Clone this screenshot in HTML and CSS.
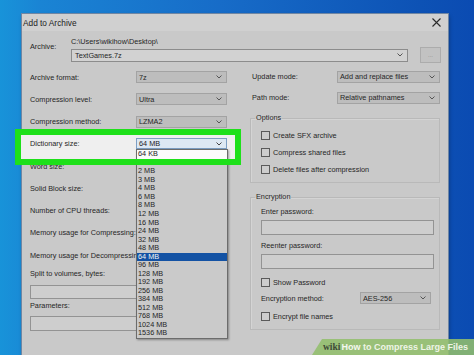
FILE: index.html
```html
<!DOCTYPE html>
<html>
<head>
<meta charset="utf-8">
<title>Add to Archive</title>
<link rel="stylesheet" href="styles.css">
</head>
<body>
<div class="desktop">
  <div class="dialog">
    <div class="titlebar">
      <span class="title">Add to Archive</span>
      <svg class="close" width="9" height="9" viewBox="0 0 9 9"><path d="M0.5 0.5L8.5 8.5M8.5 0.5L0.5 8.5" stroke="#2a2a2a" stroke-width="1.1" fill="none"/></svg>
    </div>

    <div class="archive">
      <span class="archive-lbl">Archive:</span>
      <div class="archive-fields">
        <div class="path">C:\Users\wikihow\Desktop\</div>
        <div class="archive-row">
          <div class="combo"><span>TextGames.7z</span><svg class="chev" width="6" height="4" viewBox="0 0 6 4"><polyline points="0.5,0.5 3,3 5.5,0.5" fill="none" stroke="#555" stroke-width="1"/></svg></div>
          <div class="browse">...</div>
        </div>
      </div>
    </div>

    <div class="columns">
      <div class="left">
        <div class="row"><span class="lbl">Archive format:</span><div class="select"><span>7z</span><svg class="chev" width="6" height="4" viewBox="0 0 6 4"><polyline points="0.5,0.5 3,3 5.5,0.5" fill="none" stroke="#555" stroke-width="1"/></svg></div></div>
        <div class="row"><span class="lbl">Compression level:</span><div class="select"><span>Ultra</span><svg class="chev" width="6" height="4" viewBox="0 0 6 4"><polyline points="0.5,0.5 3,3 5.5,0.5" fill="none" stroke="#555" stroke-width="1"/></svg></div></div>
        <div class="row"><span class="lbl">Compression method:</span><div class="select"><span>LZMA2</span><svg class="chev" width="6" height="4" viewBox="0 0 6 4"><polyline points="0.5,0.5 3,3 5.5,0.5" fill="none" stroke="#555" stroke-width="1"/></svg></div></div>
        <div class="row dict">
          <span class="lbl">Dictionary size:</span>
          <div class="select-wrap">
            <div class="select focus"><span>64 MB</span><svg class="chev" width="6" height="4" viewBox="0 0 6 4"><polyline points="0.5,0.5 3,3 5.5,0.5" fill="none" stroke="#444" stroke-width="1"/></svg></div>
            <ul class="dropdown">
              <li class="lit">64 KB</li>
              <li>1 MB</li>
              <li>2 MB</li>
              <li>3 MB</li>
              <li>4 MB</li>
              <li>6 MB</li>
              <li>8 MB</li>
              <li>12 MB</li>
              <li>16 MB</li>
              <li>24 MB</li>
              <li>32 MB</li>
              <li>48 MB</li>
              <li class="sel">64 MB</li>
              <li>96 MB</li>
              <li>128 MB</li>
              <li>192 MB</li>
              <li>256 MB</li>
              <li>384 MB</li>
              <li>512 MB</li>
              <li>768 MB</li>
              <li>1024 MB</li>
              <li>1536 MB</li>
            </ul>
          </div>
        </div>
        <div class="row"><span class="lbl">Word size:</span></div>
        <div class="row"><span class="lbl">Solid Block size:</span></div>
        <div class="row"><span class="lbl">Number of CPU threads:</span></div>
        <div class="row"><span class="lbl nowrap">Memory usage for Compressing:</span></div>
        <div class="row"><span class="lbl nowrap">Memory usage for Decompressing:</span></div>
        <div class="field-lbl split-lbl">Split to volumes, bytes:</div>
        <div class="input split-in"></div>
        <div class="field-lbl params-lbl">Parameters:</div>
        <div class="input params-in"></div>
      </div>

      <div class="right">
        <div class="rrow"><span class="rlbl">Update mode:</span><div class="select rsel"><span>Add and replace files</span><svg class="chev" width="6" height="4" viewBox="0 0 6 4"><polyline points="0.5,0.5 3,3 5.5,0.5" fill="none" stroke="#555" stroke-width="1"/></svg></div></div>
        <div class="rrow"><span class="rlbl">Path mode:</span><div class="select rsel"><span>Relative pathnames</span><svg class="chev" width="6" height="4" viewBox="0 0 6 4"><polyline points="0.5,0.5 3,3 5.5,0.5" fill="none" stroke="#555" stroke-width="1"/></svg></div></div>

        <fieldset class="group options">
          <legend>Options</legend>
          <div class="check"><span class="box"></span>Create SFX archive</div>
          <div class="check"><span class="box"></span>Compress shared files</div>
          <div class="check"><span class="box"></span>Delete files after compression</div>
        </fieldset>

        <fieldset class="group encryption">
          <legend>Encryption</legend>
          <div class="field-lbl enter-lbl">Enter password:</div>
          <div class="input pw"></div>
          <div class="field-lbl reenter-lbl">Reenter password:</div>
          <div class="input pw"></div>
          <div class="check show-pw"><span class="box"></span>Show Password</div>
          <div class="method-row"><span>Encryption method:</span><div class="select msel"><span>AES-256</span><svg class="chev" width="6" height="4" viewBox="0 0 6 4"><polyline points="0.5,0.5 3,3 5.5,0.5" fill="none" stroke="#555" stroke-width="1"/></svg></div></div>
          <div class="check names"><span class="box"></span>Encrypt file names</div>
        </fieldset>
      </div>
    </div>
  </div>

  <div class="spot"></div>
  <div class="spot-frame"></div>

  <div class="badge"><span class="wiki">wiki</span><span class="how">How</span><span class="rest"> to Compress Large Files</span></div>
</div>
</body>
</html>
```

FILE: styles.css
```css
* { box-sizing: border-box; }

html, body {
  margin: 0;
  padding: 0;
  width: 474px;
  height: 355px;
  overflow: hidden;
}

body {
  font-family: "Liberation Sans", Arial, sans-serif;
  font-size: 7.3px;
  color: #262626;
  background: linear-gradient(to right, #1893d9 0px, #1a84d4 40px, #176cc8 220px, #0d52b5 420px, #0b4bb2 474px);
}

.desktop {
  position: relative;
  width: 474px;
  height: 355px;
  padding: 14px 0 0 22px;
}

.dialog {
  width: 426px;
  height: 345px;
  background: #c9c9c9;
  box-shadow: 0 0 0 1px #6f86a3, 1px 2px 4px rgba(0, 0, 0, 0.35);
}

.titlebar {
  height: 17px;
  display: flex;
  align-items: center;
  justify-content: space-between;
  padding: 0 7px 0 1px;
  background: #d0d0d0;
}

.title {
  font-size: 8.3px;
  color: #222;
}

.close { display: block; }

/* Archive section */
.archive {
  display: flex;
  padding: 6px 0 0 8px;
  height: 32px;
}

.archive-lbl {
  width: 41px;
  padding-top: 5px;
}

.archive-fields {
  display: flex;
  flex-direction: column;
}

.path {
  height: 10px;
  line-height: 10px;
}

.archive-row {
  display: flex;
  align-items: center;
  height: 16px;
}

.combo {
  width: 337px;
  height: 13px;
  border: 1px solid #8c8c8c;
  background: #d2d2d2;
  display: flex;
  align-items: center;
  justify-content: space-between;
  padding: 0 4px 0 3px;
}

.browse {
  margin-left: 12px;
  width: 21px;
  height: 16px;
  border: 1px solid #acacac;
  background: #c2c2c2;
  color: #888;
  font-size: 6px;
  display: flex;
  align-items: center;
  justify-content: center;
}

.chev { display: block; flex: none; }

/* Columns */
.columns {
  display: grid;
  grid-template-columns: 197px 190px;
  column-gap: 23px;
  padding-left: 8px;
  margin-top: 3px;
}

.left {
  display: flex;
  flex-direction: column;
}

.row {
  height: 22.25px;
  display: flex;
  align-items: center;
}

.lbl {
  width: 106px;
  flex: none;
  white-space: nowrap;
}

.select {
  height: 12px;
  border: 1px solid #a3a3a3;
  background: #bdbdbd;
  display: flex;
  align-items: center;
  justify-content: space-between;
  padding: 0 4px 0 2px;
  white-space: nowrap;
}

.left .select { width: 91px; }

.dict {
  position: relative;
  z-index: 2;
}

.select-wrap {
  position: relative;
  width: 91px;
}

.select.focus {
  height: 11px;
  background: #dde8f3;
  border-color: #7d9fc4;
  color: #1e1e1e;
}

.dropdown {
  position: absolute;
  left: 0;
  top: 100%;
  width: 92px;
  margin: 0;
  padding: 0;
  list-style: none;
  background: #cacaca;
  border: 1px solid #6c6c6c;
  box-shadow: 1px 1px 2px rgba(0, 0, 0, 0.35);
}

.dropdown li {
  height: 8.52px;
  line-height: 8.52px;
  padding-left: 1px;
  white-space: nowrap;
}

.dropdown li.lit {
  background: #fbfbfb;
  color: #1e1e1e;
}

.dropdown li.sel {
  background: #1352a4;
  color: #f2f2f2;
}

.field-lbl {
  height: 10px;
  line-height: 10px;
  white-space: nowrap;
}

.input {
  border: 1px solid #939393;
  background: #cecece;
}

.split-lbl { margin-top: 3px; }
.split-in { margin-top: 6px; height: 14px; width: 197px; }
.params-lbl { margin-top: 2px; }
.params-in { margin-top: 5px; height: 15px; width: 197px; }

/* Right column */
.right {
  display: flex;
  flex-direction: column;
}

.rrow {
  height: 21px;
  display: flex;
  align-items: center;
  padding-left: 2px;
}

.rlbl {
  width: 85px;
  flex: none;
}

.rsel { width: 103px; }

.group {
  margin: 0;
  border: 1px solid #b9b9b9;
  box-shadow: inset 1px 1px 0 #d4d4d4;
  padding: 0 8px 0 10px;
  min-width: 0;
}

.group legend {
  padding: 0 1px;
  margin-left: -6px;
  height: 10px;
  line-height: 10px;
}

.options {
  margin-top: 5px;
  padding-top: 3.5px;
  padding-bottom: 4.5px;
}

.check {
  height: 17px;
  display: flex;
  align-items: center;
  white-space: nowrap;
}

.box {
  width: 9px;
  height: 9px;
  border: 1px solid #5a5a5a;
  background: #cdcdcd;
  margin-right: 3px;
  flex: none;
}

.encryption {
  margin-top: 9px;
  padding-bottom: 7px;
}

.enter-lbl { margin-top: 5px; }
.reenter-lbl { margin-top: 6px; }
.pw { margin-top: 3px; height: 15px; width: 173px; }

.show-pw { height: 12px; margin-top: 7px; }

.method-row {
  height: 12px;
  margin-top: 4px;
  display: flex;
  align-items: center;
  justify-content: space-between;
}

.msel { width: 71px; }

.names { height: 12px; margin-top: 6px; }

/* Highlight overlay */
.spot {
  position: absolute;
  left: 15px;
  top: 129px;
  width: 226px;
  height: 36px;
  background: #efefef;
  z-index: 1;
}

.spot-frame {
  position: absolute;
  left: 15px;
  top: 129px;
  width: 226px;
  height: 36px;
  border: 6px solid #1ee01a;
  z-index: 4;
}

/* wikiHow badge */
.badge {
  position: absolute;
  right: 0;
  bottom: 0;
  width: 162px;
  height: 16px;
  background: rgba(146, 190, 108, 0.88);
  clip-path: polygon(10px 0, 100% 0, 100% 100%, 0 100%);
  padding-left: 11px;
  display: flex;
  align-items: center;
  white-space: nowrap;
  z-index: 5;
  font-weight: bold;
  font-size: 9px;
}

.wiki {
  font-family: "Liberation Serif", serif;
  color: #3d4a36;
  font-size: 9.5px;
}

.how {
  color: #f4f7ef;
  margin-left: 1px;
}

.rest {
  color: #eef4e6;
  white-space: pre;
}
```
